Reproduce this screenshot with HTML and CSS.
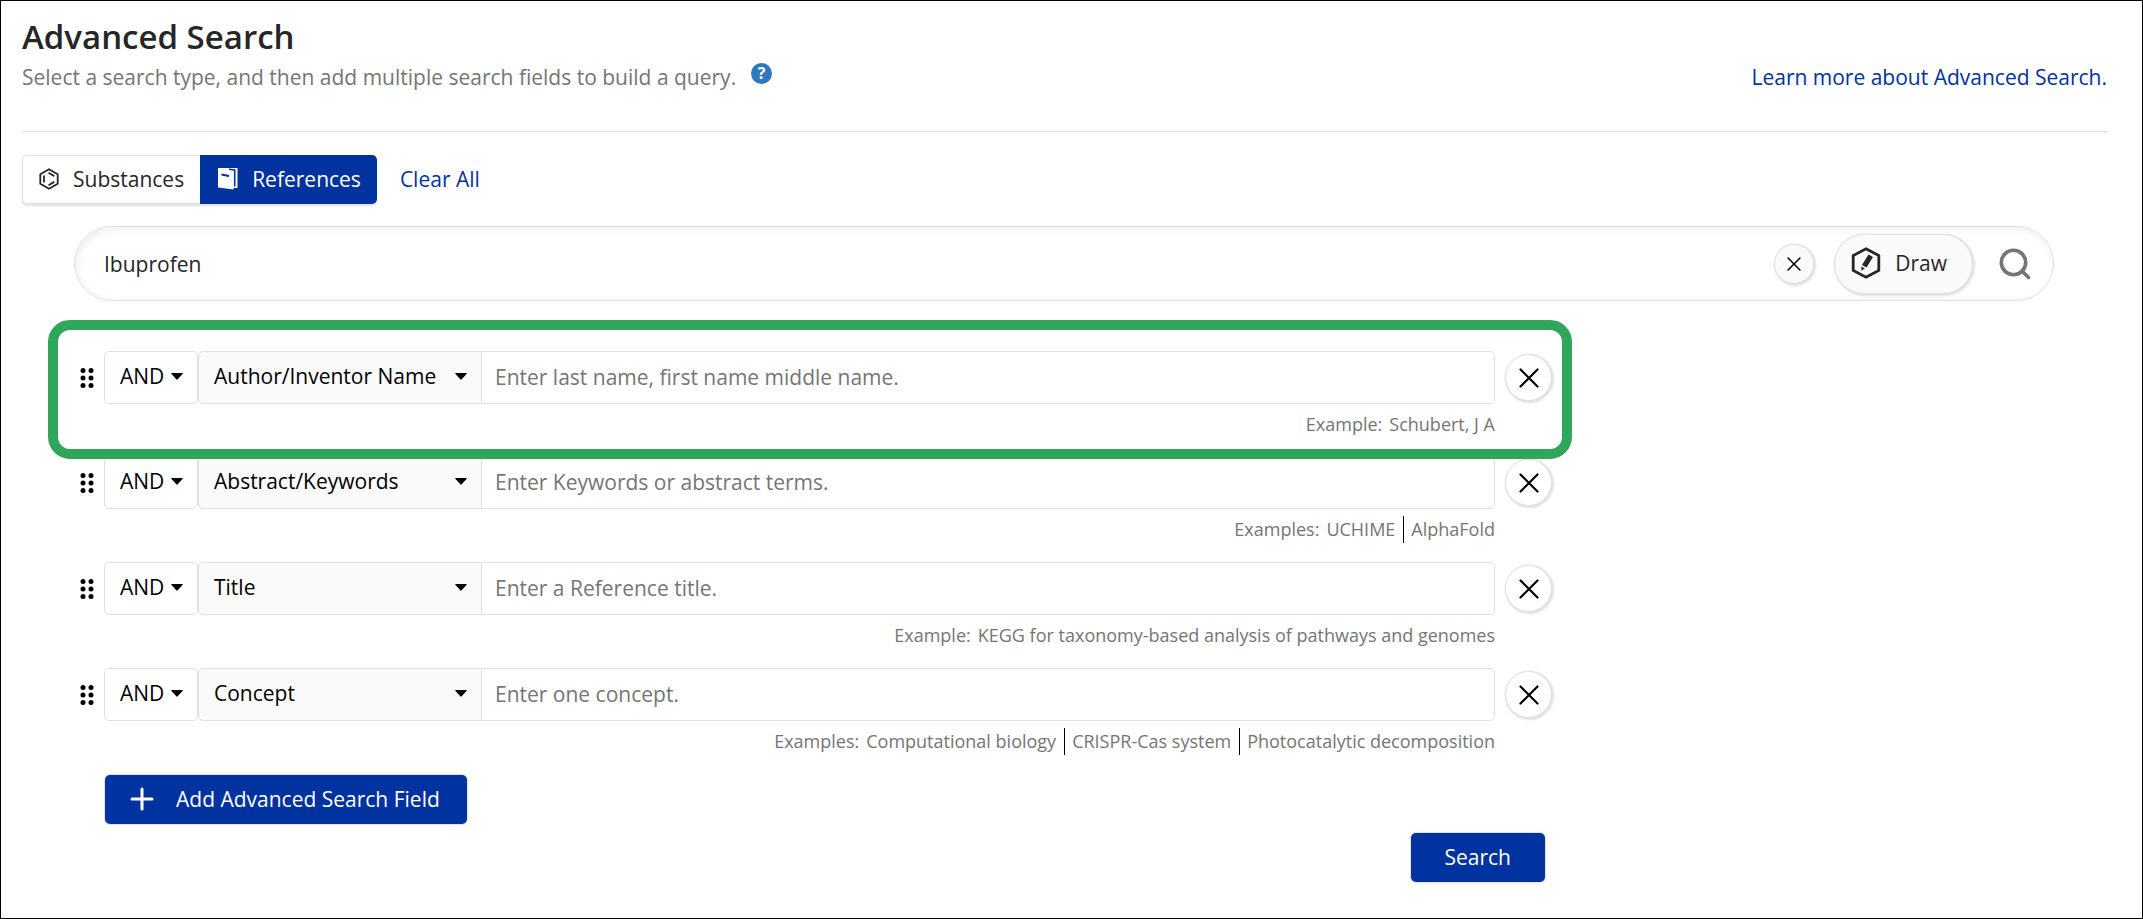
FILE: index.html
```html
<!DOCTYPE html>
<html lang="en">
<head>
    <meta charset="UTF-8">
    <meta name="viewport" content="width=device-width, initial-scale=1.0">
    <title>Advanced Search</title>
    <link rel="stylesheet" href="styles.css">
</head>
<body>
    <!-- Shared icons -->
    <svg class="sprite" aria-hidden="true">
        <symbol id="icon-close" viewBox="0 0 20 20">
            <path d="M1.500 1.500L18.500 18.500M18.500 1.500L1.500 18.500" fill="none" stroke="currentColor" stroke-width="2.200" stroke-linecap="round"/>
        </symbol>
        <symbol id="icon-caret" viewBox="0 0 12 7">
            <path d="M0.500 0H11.500Q12 0.500 11.500 1L6.700 6.300Q6 7 5.300 6.300L0.500 1Q0 0.500 0.500 0Z" fill="currentColor"/>
        </symbol>
        <symbol id="icon-drag" viewBox="0 0 14 20">
            <g fill="currentColor">
                <circle cx="3" cy="2.500" r="2.500"/><circle cx="11" cy="2.500" r="2.500"/>
                <circle cx="3" cy="10" r="2.500"/><circle cx="11" cy="10" r="2.500"/>
                <circle cx="3" cy="17.500" r="2.500"/><circle cx="11" cy="17.500" r="2.500"/>
            </g>
        </symbol>
    </svg>

    <div class="page">
        <header class="page-header">
            <div>
                <h1>Advanced Search</h1>
                <div class="subtitle">
                    <p>Select a search type, and then add multiple search fields to build a query.</p>
                    <button type="button" class="help-btn" aria-label="Help">?</button>
                </div>
            </div>
            <a href="#">Learn more about Advanced Search.</a>
        </header>

        <nav class="tabs">
            <div class="tab-group">
                <button type="button" class="tab">
                    <svg width="20" height="22" viewBox="0 0 20 22" fill="none" stroke="currentColor" stroke-width="1.800">
                        <path d="M10 1.300L18.700 6.200V15.800L10 20.700L1.300 15.800V6.200Z"/>
                        <path d="M5 7.500V14.500M9.500 4.800L15.300 8.100M9.500 17.200L15.300 13.900"/>
                    </svg>
                    Substances
                </button>
                <button type="button" class="tab active">
                    <svg width="20" height="22" viewBox="0 0 20 22">
                        <path d="M0 0H19.500V20H15.500V21.500L0 19.500Z" fill="currentColor"/>
                        <path d="M11 1.300L16.700 2V18.500" fill="none" stroke="#0032a0" stroke-width="1.600"/>
                        <path d="M3.500 6.500L11 8" fill="none" stroke="#0032a0" stroke-width="1.800"/>
                    </svg>
                    References
                </button>
            </div>
            <a href="#">Clear All</a>
        </nav>

        <form class="search-form">
            <div class="query-bar">
                <input type="text" class="query-input" aria-label="Search query" value="Ibuprofen">
                <button type="button" class="round-btn small" aria-label="Clear query">
                    <svg width="14" height="14"><use href="#icon-close"/></svg>
                </button>
                <button type="button" class="draw-btn">
                    <svg width="30" height="32" viewBox="0 0 30 32">
                        <path d="M15 1.800L27.800 8.500V23.500L15 30.200L2.200 23.500V8.500Z" fill="none" stroke="currentColor" stroke-width="2.800"/>
                        <path d="M17.500 7.500L22 10L15.500 20.500L11 18Z" fill="currentColor"/>
                        <path d="M10.500 19.500L13.800 21.500L10.200 23.800Z" fill="currentColor"/>
                    </svg>
                    Draw
                </button>
                <button type="submit" class="icon-btn" aria-label="Run search">
                    <svg width="32" height="32" viewBox="0 0 32 32" fill="none" stroke="currentColor" stroke-width="3.600">
                        <circle cx="14.500" cy="14.500" r="12.200"/>
                        <path d="M23 23L29.500 29.500" stroke-linecap="round"/>
                    </svg>
                </button>
            </div>

            <div class="fields">
                <div class="field-row highlighted">
                    <svg class="drag" width="14" height="20"><use href="#icon-drag"/></svg>
                    <div class="select operator">
                        <select aria-label="Operator 1"><option>AND</option><option>OR</option><option>NOT</option></select>
                        <svg class="caret" width="12" height="7"><use href="#icon-caret"/></svg>
                    </div>
                    <div class="select type">
                        <select aria-label="Field 1"><option>Author/Inventor Name</option></select>
                        <svg class="caret" width="12" height="7"><use href="#icon-caret"/></svg>
                    </div>
                    <input type="text" class="term" aria-label="Author/Inventor Name" placeholder="Enter last name, first name middle name.">
                    <button type="button" class="round-btn" aria-label="Remove field 1">
                        <svg width="20" height="20"><use href="#icon-close"/></svg>
                    </button>
                    <p class="examples"><span class="label">Example:</span> <span>Schubert, J A</span></p>
                </div>

                <div class="field-row">
                    <svg class="drag" width="14" height="20"><use href="#icon-drag"/></svg>
                    <div class="select operator">
                        <select aria-label="Operator 2"><option>AND</option><option>OR</option><option>NOT</option></select>
                        <svg class="caret" width="12" height="7"><use href="#icon-caret"/></svg>
                    </div>
                    <div class="select type">
                        <select aria-label="Field 2"><option>Abstract/Keywords</option></select>
                        <svg class="caret" width="12" height="7"><use href="#icon-caret"/></svg>
                    </div>
                    <input type="text" class="term" aria-label="Abstract/Keywords" placeholder="Enter Keywords or abstract terms.">
                    <button type="button" class="round-btn" aria-label="Remove field 2">
                        <svg width="20" height="20"><use href="#icon-close"/></svg>
                    </button>
                    <p class="examples"><span class="label">Examples:</span> <span>UCHIME</span> <span>AlphaFold</span></p>
                </div>

                <div class="field-row">
                    <svg class="drag" width="14" height="20"><use href="#icon-drag"/></svg>
                    <div class="select operator">
                        <select aria-label="Operator 3"><option>AND</option><option>OR</option><option>NOT</option></select>
                        <svg class="caret" width="12" height="7"><use href="#icon-caret"/></svg>
                    </div>
                    <div class="select type">
                        <select aria-label="Field 3"><option>Title</option></select>
                        <svg class="caret" width="12" height="7"><use href="#icon-caret"/></svg>
                    </div>
                    <input type="text" class="term" aria-label="Title" placeholder="Enter a Reference title.">
                    <button type="button" class="round-btn" aria-label="Remove field 3">
                        <svg width="20" height="20"><use href="#icon-close"/></svg>
                    </button>
                    <p class="examples"><span class="label">Example:</span> <span>KEGG for taxonomy-based analysis of pathways and genomes</span></p>
                </div>

                <div class="field-row">
                    <svg class="drag" width="14" height="20"><use href="#icon-drag"/></svg>
                    <div class="select operator">
                        <select aria-label="Operator 4"><option>AND</option><option>OR</option><option>NOT</option></select>
                        <svg class="caret" width="12" height="7"><use href="#icon-caret"/></svg>
                    </div>
                    <div class="select type">
                        <select aria-label="Field 4"><option>Concept</option></select>
                        <svg class="caret" width="12" height="7"><use href="#icon-caret"/></svg>
                    </div>
                    <input type="text" class="term" aria-label="Concept" placeholder="Enter one concept.">
                    <button type="button" class="round-btn" aria-label="Remove field 4">
                        <svg width="20" height="20"><use href="#icon-close"/></svg>
                    </button>
                    <p class="examples"><span class="label">Examples:</span> <span>Computational biology</span> <span>CRISPR-Cas system</span> <span>Photocatalytic decomposition</span></p>
                </div>

                <div class="actions">
                    <button type="button" class="primary-btn add-btn">
                        <svg width="24" height="24" viewBox="0 0 24 24" fill="none" stroke="currentColor" stroke-width="3" stroke-linecap="round">
                            <path d="M12 2V22M2 12H22"/>
                        </svg>
                        Add Advanced Search Field
                    </button>
                    <button type="submit" class="primary-btn search-btn">Search</button>
                </div>
            </div>
        </form>
    </div>
</body>
</html>
```
FILE: styles.css
```css
* {
    box-sizing: border-box;
}
body {
    margin: 0;
    font-family: "Open Sans", "Noto Sans", sans-serif;
    font-size: 21px;
    line-height: 28px;
    color: #262626;
    background-color: white;
}
h1, p {
    margin: 0;
}
a {
    color: #0032a0;
    text-decoration: none;
}
button, input, select {
    font: inherit;
    color: inherit;
}
button {
    display: flex;
    align-items: center;
    justify-content: center;
    padding: 0;
    border: none;
    cursor: pointer;
}
.sprite {
    position: absolute;
    width: 0;
    height: 0;
}
.page {
    min-height: 100vh;
    padding: 14px 35px 36px 21px;
    border: 1px solid black;
}

/* Header */
.page-header {
    display: flex;
    justify-content: space-between;
    align-items: flex-end;
    padding-bottom: 40px;
    border-bottom: 1px solid #e0e0e0;
}
h1 {
    font-size: 33px;
    font-weight: 600;
    line-height: 44px;
}
.subtitle {
    display: flex;
    gap: 15px;
    margin-top: 4px;
    color: #757575;
}
.help-btn {
    width: 21px;
    height: 21px;
    border-radius: 50%;
    background-color: #2f78bd;
    color: white;
    font-size: 16px;
    font-weight: 700;
    line-height: 21px;
}

/* Tabs */
.tabs {
    display: flex;
    align-items: center;
    gap: 23px;
    margin-top: 23px;
}
.tabs > a {
    padding-bottom: 2px;
}
.tab-group {
    display: flex;
    border-radius: 5px;
    box-shadow: 0 2px 2px rgba(0, 0, 0, 0.12);
}
.tab {
    gap: 14px;
    height: 49px;
    padding: 0 16px 2px;
    border: 1px solid #e0e0e0;
    border-right: none;
    border-radius: 5px 0 0 5px;
    background-color: white;
}
.tab.active {
    padding-left: 18px;
    border: none;
    border-radius: 0 5px 5px 0;
    background-color: #0032a0;
    color: white;
}

/* Query bar */
.query-bar {
    display: flex;
    align-items: center;
    height: 75px;
    margin: 22px 53px 0 52px;
    padding: 0 22px 0 29px;
    border: 1px solid #e0e0e0;
    border-radius: 38px;
    box-shadow: inset 2px 2px 8px rgba(0, 0, 0, 0.08);
}
.query-input {
    flex: 1;
    min-width: 0;
    padding: 0;
    border: none;
    background: none;
    outline: none;
}
.round-btn {
    width: 47px;
    height: 47px;
    border: 1px solid #e0e0e0;
    border-radius: 50%;
    background-color: white;
    box-shadow: 1px 1px 2px 1px rgba(0, 0, 0, 0.12);
    color: black;
}
.round-btn.small {
    width: 40px;
    height: 40px;
    background-color: #fafafa;
}
.draw-btn {
    gap: 14px;
    height: 60px;
    margin: 0 26px 0 20px;
    padding: 0 25px 2px 16px;
    border: 1px solid #e0e0e0;
    border-radius: 30px;
    background-color: #fafafa;
    box-shadow: 1px 1px 2px 1px rgba(0, 0, 0, 0.12);
}
.icon-btn {
    background: none;
    color: #757575;
}

/* Search fields */
.fields {
    max-width: 1524px;
    margin: 19px 0 0 26px;
}
.field-row {
    display: grid;
    grid-template-columns: 24px 94px 284px 1fr 57px;
    grid-template-rows: 53px 39px;
    align-items: center;
    align-content: start;
    height: 106px;
    padding: 0 20px 0 32px;
}
.field-row.highlighted {
    position: relative;
    z-index: 1;
    height: 139px;
    margin-bottom: -3px;
    padding: 21px 10px 0 22px;
    border: 10px solid #2fa65c;
    border-radius: 22px;
}
.drag {
    color: black;
}
.select {
    position: relative;
    height: 100%;
    color: black;
}
.select select {
    width: 100%;
    height: 100%;
    padding: 0 0 3px 15px;
    border: 1px solid #e0e0e0;
    border-radius: 5px;
    background-color: white;
    appearance: none;
}
.type select {
    border-radius: 5px 0 0 5px;
    background-color: #fafafa;
}
.caret {
    position: absolute;
    top: 22px;
    right: 15px;
    pointer-events: none;
}
.term {
    width: 100%;
    min-width: 0;
    height: 100%;
    padding: 0 13px 1px;
    border: 1px solid #e0e0e0;
    border-left: none;
    border-radius: 0 5px 5px 0;
}
.term::placeholder {
    color: #757575;
    opacity: 1;
}
.field-row .round-btn {
    justify-self: end;
}
.examples {
    display: flex;
    grid-column: 2 / 5;
    justify-content: flex-end;
    padding-top: 2px;
    color: #757575;
    font-size: 18px;
    line-height: 27px;
}
.examples .label {
    margin-right: 7px;
}
.examples span:not(.label) + span {
    margin-left: 8px;
    padding-left: 7px;
    border-left: 1px solid black;
}

/* Buttons */
.primary-btn {
    height: 49px;
    padding: 0 34px 2px;
    border-radius: 5px;
    background-color: #0032a0;
    color: white;
    box-shadow: 0 0 1px 1px rgba(0, 0, 0, 0.12);
}
.actions {
    padding: 1px 27px 0 57px;
}
.add-btn {
    gap: 22px;
    padding: 0 27px 2px 25px;
}
.search-btn {
    margin: 9px 0 0 auto;
}
```
